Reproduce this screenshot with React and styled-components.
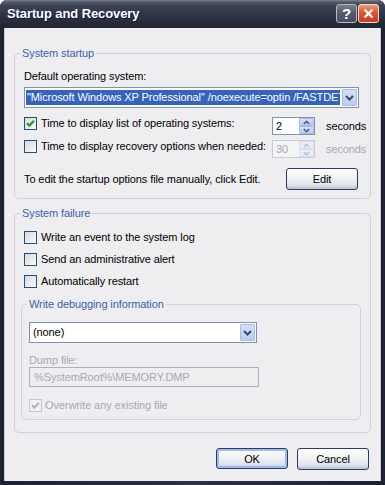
import React from 'react'
import styled, { createGlobalStyle } from 'styled-components'

const GlobalStyle = createGlobalStyle`
  html, body {
    margin: 0;
    padding: 0;
    background: #ffffff;
  }
  body {
    font-family: 'Liberation Sans', Arial, sans-serif;
    font-size: 11px;
    letter-spacing: -0.1px;
    color: #000000;
  }
`

function Check({ checked, disabled }) {
    return (
        <Box $disabled={disabled}>
            {checked && (
                <svg width='9' height='9' viewBox='0 0 9 9'>
                    <path
                        d='M1 4.2 L3.4 6.6 L8 1.8'
                        fill='none'
                        stroke={disabled ? '#b9b8c2' : '#21a121'}
                        strokeWidth='2.2'
                    />
                </svg>
            )}
        </Box>
    )
}

function Chevron({ color = '#3b4a68', down = true, w = 9, h = 6 }) {
    return (
        <svg width={w} height={h} viewBox='0 0 9 6'>
            <path
                d={down ? 'M1 1 L4.5 4.5 L8 1' : 'M1 5 L4.5 1.5 L8 5'}
                fill='none'
                stroke={color}
                strokeWidth='2'
            />
        </svg>
    )
}

function Spinner({ value, disabled }) {
    const c = disabled ? '#b8c4dc' : '#4b5d80'
    return (
        <SpinBox $disabled={disabled}>
            <SpinValue $disabled={disabled}>{value}</SpinValue>
            <SpinButtons>
                <SpinBtn $disabled={disabled}>
                    <Chevron down={false} color={c} w={7} h={5} />
                </SpinBtn>
                <SpinBtn $disabled={disabled}>
                    <Chevron color={c} w={7} h={5} />
                </SpinBtn>
            </SpinButtons>
        </SpinBox>
    )
}

function App() {
    return (
        <>
            <GlobalStyle />
            <Window>
                <TitleBar>
                    <Title>Startup and Recovery</Title>
                    <HelpBtn>?</HelpBtn>
                    <CloseBtn>
                        <svg width='11' height='11' viewBox='0 0 11 11'>
                            <path d='M1.5 1.5 L9.5 9.5 M9.5 1.5 L1.5 9.5' stroke='#fff' strokeWidth='2.4' />
                        </svg>
                    </CloseBtn>
                </TitleBar>
                <Client>
                    <Group $top={25} $pad='16px 11px 8px 9px'>
                        <Legend>System startup</Legend>
                        <Line>Default operating system:</Line>
                        <Combo $mt={4}>
                            <ComboValue>
                                <Selected>
                                    "Microsoft Windows XP Professional" /noexecute=optin /FASTDETECT
                                </Selected>
                            </ComboValue>
                            <DropBtn>
                                <Chevron />
                            </DropBtn>
                        </Combo>
                        <SpinRow $mt={9}>
                            <CheckItem>
                                <Check checked />
                                <span>Time to display list of operating systems:</span>
                            </CheckItem>
                            <Spinner value='2' />
                            <Unit>seconds</Unit>
                        </SpinRow>
                        <SpinRow $mt={5}>
                            <CheckItem>
                                <Check />
                                <span>Time to display recovery options when needed:</span>
                            </CheckItem>
                            <Spinner value='30' disabled />
                            <Unit $disabled>seconds</Unit>
                        </SpinRow>
                        <EditRow>
                            <span>To edit the startup options file manually, click Edit.</span>
                            <Button>Edit</Button>
                        </EditRow>
                    </Group>

                    <Group $top={14} $pad='17px 9px 12px 6px'>
                        <Legend>System failure</Legend>
                        <CheckList>
                            <CheckItem>
                                <Check />
                                <span>Write an event to the system log</span>
                            </CheckItem>
                            <CheckItem>
                                <Check />
                                <span>Send an administrative alert</span>
                            </CheckItem>
                            <CheckItem>
                                <Check />
                                <span>Automatically restart</span>
                            </CheckItem>
                        </CheckList>
                        <Group $top={16} $pad='17px 7px 7px 7px'>
                            <Legend>Write debugging information</Legend>
                            <Combo $w={228}>
                                <ComboValue $plain>(none)</ComboValue>
                                <DropBtn>
                                    <Chevron />
                                </DropBtn>
                            </Combo>
                            <Line $mt={11} $disabled>
                                Dump file:
                            </Line>
                            <TextBox>%SystemRoot%\MEMORY.DMP</TextBox>
                            <DisabledCheck>
                                <Check checked disabled />
                                <span>Overwrite any existing file</span>
                            </DisabledCheck>
                        </Group>
                    </Group>

                    <Actions>
                        <Button $default>OK</Button>
                        <Button>Cancel</Button>
                    </Actions>
                </Client>
            </Window>
        </>
    )
}

export default App

const Window = styled.div`
    width: 385px;
    height: 485px;
    display: flex;
    flex-direction: column;
    box-sizing: border-box;
    border-radius: 7px 7px 0 0;
    overflow: hidden;
    background: linear-gradient(90deg, #1c2230, #2a3142 50%, #1c2230);
`

const TitleBar = styled.div`
    height: 28px;
    flex: none;
    display: flex;
    align-items: center;
    gap: 1px;
    box-sizing: border-box;
    padding: 0 6px 1px 7px;
    background: linear-gradient(#7b8292 0, #535a6a 2px, #3d4454 5px, #30374a 13px, #272d3a 21px, #1f2430 28px);
`

const Title = styled.div`
    flex: 1;
    color: #ffffff;
    font-weight: bold;
    font-size: 13px;
    letter-spacing: -0.1px;
    text-shadow: 1px 1px 0 #0c1552;
`

const CaptionBtn = styled.div`
    width: 21px;
    height: 19px;
    box-sizing: border-box;
    border-radius: 3px;
    display: flex;
    align-items: center;
    justify-content: center;
`

const HelpBtn = styled(CaptionBtn)`
    border: 1px solid #b4b9c3;
    background: linear-gradient(#7a8090, #535968 50%, #474d5c);
    color: #ffffff;
    font-weight: bold;
    font-size: 15px;
`

const CloseBtn = styled(CaptionBtn)`
    border: 1px solid #f3ddd6;
    background: linear-gradient(#f29a78, #e0542f 45%, #cc3a1d);
`

const Client = styled.div`
    flex: 1;
    margin: 0 4px 4px 4px;
    padding: 0 10px;
    background: #eeedf0;
    box-shadow: inset 1px 0 0 #c9c8d2, inset -1px 0 0 #c9c8d2;
    display: flex;
    flex-direction: column;
`

const Group = styled.div`
    position: relative;
    margin-top: ${p => p.$top}px;
    padding: ${p => p.$pad};
    border: 1px solid #d2d0da;
    border-radius: 5px;
    display: flex;
    flex-direction: column;
`

const Legend = styled.div`
    position: absolute;
    top: -8px;
    left: 5px;
    padding: 0 2px;
    line-height: 14px;
    background: #eeedf0;
    color: #3d5fae;
`

const Line = styled.div`
    line-height: 13px;
    margin-top: ${p => p.$mt || 0}px;
    color: ${p => (p.$disabled ? '#aaa8b4' : '#000')};
`

const Combo = styled.div`
    width: ${p => (p.$w ? `${p.$w}px` : '100%')};
    height: 21px;
    margin-top: ${p => p.$mt || 0}px;
    box-sizing: border-box;
    border: 1px solid #7f93b0;
    background: #ffffff;
    display: flex;
`

const ComboValue = styled.div`
    flex: 1;
    min-width: 0;
    overflow: hidden;
    white-space: nowrap;
    padding: ${p => (p.$plain ? '0 3px' : '2px 1px 2px 1px')};
    line-height: ${p => (p.$plain ? '19px' : '15px')};
`

const Selected = styled.div`
    background: #3563bf;
    color: #ffffff;
    padding-left: 1px;
    height: 15px;
    line-height: 15px;
    overflow: hidden;
`

const DropBtn = styled.div`
    width: 15px;
    margin: 1px;
    flex: none;
    box-sizing: border-box;
    border: 1px solid #a9bce4;
    border-radius: 1px;
    background: linear-gradient(#d4e0fb, #b9ccf5);
    display: flex;
    align-items: center;
    justify-content: center;
`

const SpinRow = styled.div`
    margin-top: ${p => p.$mt}px;
    display: grid;
    grid-template-columns: 248px 43px auto;
    align-items: start;
`

const CheckItem = styled.div`
    display: flex;
    align-items: center;
    gap: 4px;
    height: 13px;
    line-height: 13px;
    white-space: nowrap;
`

const Box = styled.span`
    width: 13px;
    height: 13px;
    flex: none;
    box-sizing: border-box;
    border: 1px solid ${p => (p.$disabled ? '#c7c6d0' : '#1c5180')};
    background: ${p => (p.$disabled ? '#f3f3f5' : 'linear-gradient(135deg, #d9d9de, #fafafa)')};
    display: flex;
    align-items: center;
    justify-content: center;
`

const SpinBox = styled.div`
    height: 18px;
    box-sizing: border-box;
    border: 1px solid ${p => (p.$disabled ? '#c8ccd6' : '#7f93b0')};
    background: ${p => (p.$disabled ? '#f4f4f6' : '#fff')};
    display: flex;
`

const SpinValue = styled.div`
    flex: 1;
    padding-left: 3px;
    line-height: 16px;
    color: ${p => (p.$disabled ? '#aaa8b4' : '#000')};
`

const SpinButtons = styled.div`
    width: 15px;
    display: flex;
    flex-direction: column;
`

const SpinBtn = styled.div`
    flex: 1;
    box-sizing: border-box;
    border: 1px solid ${p => (p.$disabled ? '#d6deef' : '#a9bce4')};
    border-radius: 1px;
    background: ${p => (p.$disabled ? '#e8edf8' : 'linear-gradient(#d6e2fb, #b8cbf4)')};
    display: flex;
    align-items: center;
    justify-content: center;
`

const Unit = styled.span`
    margin-left: 11px;
    line-height: 18px;
    color: ${p => (p.$disabled ? '#aaa8b4' : '#000')};
`

const EditRow = styled.div`
    margin-top: 10px;
    display: flex;
    align-items: center;
    justify-content: space-between;
    padding-right: 1px;
`

const Button = styled.button`
    width: 72px;
    height: ${p => (p.$default ? '21px' : '22px')};
    box-sizing: border-box;
    padding: 0;
    border: 1px solid #2a3a62;
    border-radius: 3px;
    font-family: 'Liberation Sans', Arial, sans-serif;
    font-size: 11px;
    letter-spacing: -0.1px;
    color: #000;
    background: linear-gradient(#ffffff 0%, #f5f5f8 35%, #e4e6ee 75%, #ccd1df 100%);
    box-shadow: ${p => (p.$default ? 'inset 0 0 0 2px #9dbbf0' : 'inset 0 -2px 0 #c3c8d8')};
`

const CheckList = styled.div`
    padding-left: 3px;
    display: flex;
    flex-direction: column;
    gap: 9px;
`

const TextBox = styled.div`
    width: 230px;
    height: 20px;
    box-sizing: border-box;
    border: 1px solid #b0b0b8;
    padding-left: 4px;
    line-height: 18px;
    color: #aaa8b4;
`

const DisabledCheck = styled(CheckItem)`
    margin-top: 12px;
    color: #aaa8b4;
    gap: 3px;
`

const Actions = styled.div`
    margin-top: 15px;
    display: flex;
    justify-content: flex-end;
    gap: 9px;
    padding-right: 2px;
`
